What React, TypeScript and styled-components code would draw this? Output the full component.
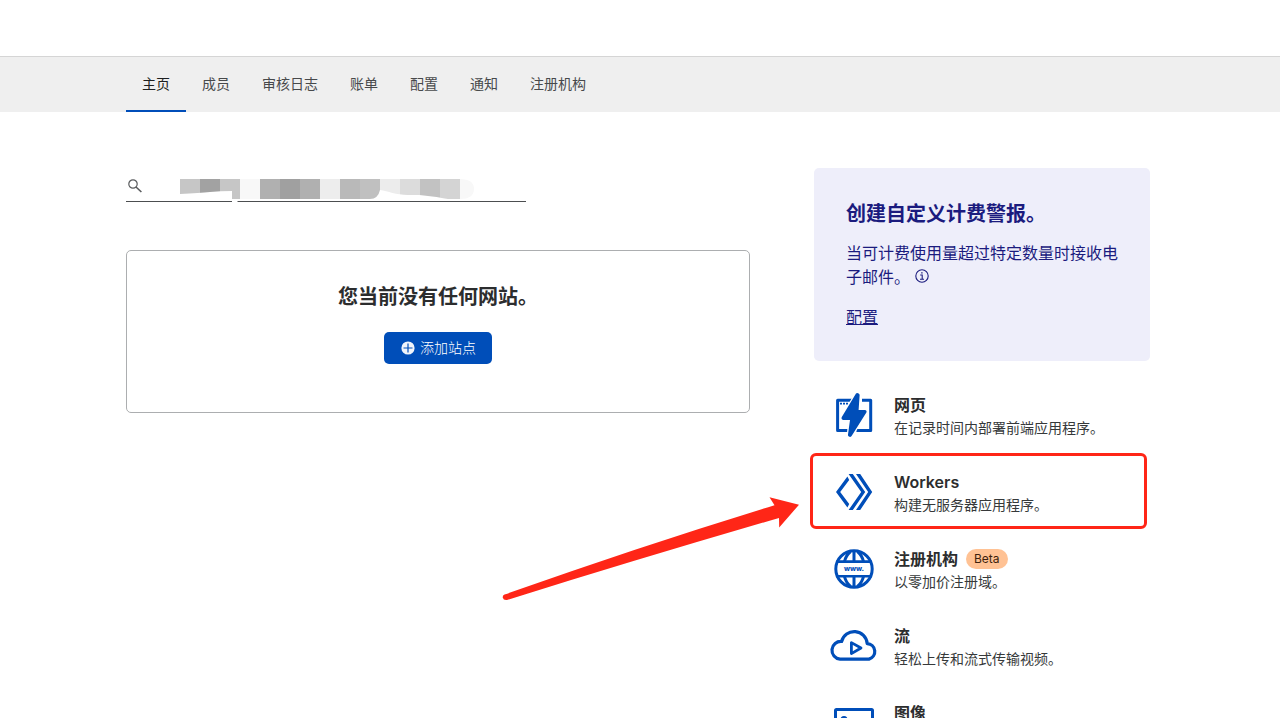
import React from 'react';
import styled, { createGlobalStyle } from 'styled-components';

const BLUE = '#004eb9';
const NAVY = '#1b1b7e';
const RED = '#ff2617';

const GlobalStyle = createGlobalStyle`
  *, *::before, *::after { box-sizing: border-box; }
  html { scrollbar-width: none; }
  body {
    margin: 0;
    background: #fff;
    color: #2c2d2e;
    font-family: Inter, 'Noto Sans CJK SC', sans-serif;
    font-size: 14px;
    line-height: 21px;
  }
  h1, h2, h3, p, ul { margin: 0; padding: 0; }
  button, input { font: inherit; }
`;

const Header = styled.header`
  height: 56px;
`;

const NavBar = styled.nav`
  height: 56px;
  padding-right: 4px;
  border-top: 1px solid #d5d5d5;
  background: #efefef;
`;

const Tabs = styled.div`
  display: flex;
  height: 100%;
  max-width: 1024px;
  margin: 0 auto;
`;

const Tab = styled.a<{ $active?: boolean }>`
  display: flex;
  align-items: center;
  padding: 0 16px;
  border-bottom: 2px solid ${({ $active }) => ($active ? BLUE : 'transparent')};
  color: ${({ $active }) => ($active ? '#1d1f20' : '#47494b')};
  text-decoration: none;
  white-space: nowrap;
`;

const Page = styled.main`
  padding: 56px 4px 0 0;
`;

const Columns = styled.div`
  display: grid;
  grid-template-columns: minmax(0, 1fr) 336px;
  gap: 64px;
  max-width: 1024px;
  margin: 0 auto;
`;

const Primary = styled.section`
  display: flex;
  flex-direction: column;
  gap: 48px;
`;

const SearchField = styled.label`
  position: relative;
  display: flex;
  align-items: center;
  gap: 8px;
  width: 400px;
  height: 34px;
  padding: 2px 0 0 2px;
  border-bottom: 1px solid #4c4e50;
`;

const SearchInput = styled.input`
  flex: 1;
  min-width: 0;
  padding: 0;
  border: 0;
  outline: 0;
  background: transparent;
`;

const Redaction = styled.svg`
  position: absolute;
  left: 54px;
  top: 11px;
`;

const EmptyCard = styled.div`
  display: flex;
  flex-direction: column;
  align-items: center;
  gap: 24px;
  padding: 32px 32px 48px;
  border: 1px solid #acaeb0;
  border-radius: 5px;
`;

const Heading = styled.h2`
  padding-top: 4px;
  font-size: 20px;
  font-weight: 600;
  line-height: 21px;
`;

const AddButton = styled.button`
  display: flex;
  align-items: center;
  gap: 4px;
  height: 32px;
  padding: 0 16px;
  border: 0;
  border-radius: 5px;
  background: ${BLUE};
  color: #fff;
  font-weight: 300;
  line-height: 20px;
  cursor: pointer;
`;

const AlertCard = styled.section`
  display: flex;
  flex-direction: column;
  align-items: flex-start;
  gap: 16px;
  padding: 32px;
  border-radius: 5px;
  background: #eeeefa;
  color: ${NAVY};
  font-size: 16px;
  line-height: 24px;
`;

const InfoButton = styled.button`
  display: inline-flex;
  margin-left: 5px;
  padding: 0 0 1px;
  border: 0;
  background: none;
  color: inherit;
`;

const AlertLink = styled.a`
  color: inherit;
  text-decoration: underline;
`;

const ProductList = styled.ul`
  padding-top: 16px;
  list-style: none;
`;

const Product = styled.li`
  position: relative;
  display: flex;
  gap: 16px;
  padding: 16px;
`;

const ProductIcon = styled.svg`
  flex: none;
  width: 48px;
  height: 45px;
  color: ${BLUE};
`;

const ProductTitle = styled.h3`
  display: flex;
  align-items: center;
  gap: 8px;
  font-size: 16px;
  font-weight: 600;
  line-height: 24px;
`;

const ProductText = styled.p`
  color: #36393a;
`;

const Badge = styled.span`
  padding: 0 8px;
  border-radius: 10px;
  background: #ffc294;
  color: #3d1f0c;
  font-size: 12px;
  font-weight: 400;
  line-height: 20px;
`;

const HighlightBox = styled.span`
  position: absolute;
  inset: -1px 3px 2px -4px;
  border: 3px solid ${RED};
  border-radius: 6px;
  pointer-events: none;
`;

const HighlightArrow = styled.svg`
  position: absolute;
  top: 42px;
  right: calc(100% + 14px);
  pointer-events: none;
`;

const tabs = ['主页', '成员', '审核日志', '账单', '配置', '通知', '注册机构'];

const mosaic = [
  '#c6c6c6', '#a2a2a2', '#c6c6c6', '#f8f8f8', '#b0b0b0', '#a0a0a0', '#b0b0b0', '#ededed',
  '#b9b9b9', '#c0c0c0', '#ececec', '#dcdcdc', '#c2c2c2', '#d4d4d4', '#f8f8f8',
];

const PagesIcon = () => (
  <g>
    <path
      d="M23 8.2H7.6v30.3h10M32 8.2h8.7v30.3H26.4"
      fill="none"
      stroke="currentColor"
      strokeWidth="3"
      strokeLinejoin="round"
    />
    <path d="M10 10.8h2v1.8h-2zM13 10.8h2v1.8h-2zM16 10.8h2v1.8h-2z" fill="currentColor" />
    <path
      d="M26 1.6Q27 .6 28.6 1.4 29.8 2 29.6 3.4L28.6 18H35Q37.4 18.4 36.2 20.8L21.6 44Q20.4 45.4 19 44.6 17.8 44 18 42.6L20 28H13Q10.8 27.4 11.8 25Z"
      fill="currentColor"
      stroke="#fff"
      strokeWidth="2.4"
      paintOrder="stroke"
    />
  </g>
);

const WorkersIcon = () => (
  <g fill="currentColor">
    <path d="M17.4 7.6 6 23l11.4 15.4 1.8-3.4L10.2 23l9-12Z" />
    <path d="M18.6 5h4.2L35.2 23 22.8 41h-4.2L31.2 23Z" />
    <path d="M26 5h4.2L42.2 23 30.200 41H26L38.2 23Z" />
  </g>
);

const RegistrarIcon = () => (
  <g fill="none" stroke="currentColor" strokeWidth="3">
    <circle cx="24" cy="23" r="18.2" />
    <path d="M24 5v11M24 30v11" />
    <path d="M20.5 5.5Q15.6 9.8 14.4 16M27.5 5.5Q32.4 9.8 33.6 16M20.5 40.5Q15.6 36.2 14.4 30M27.5 40.5Q32.4 36.2 33.6 30" />
    <path d="M6.5 15.6h35M6.500 30.2h35" strokeWidth="2.6" />
    <text x="24" y="25" textAnchor="middle" fontSize="7" fontWeight="800" fill="currentColor" stroke="none">
      www.
    </text>
  </g>
);

const StreamIcon = () => (
  <g fill="none" stroke="currentColor" strokeWidth="3.2" strokeLinejoin="round">
    <path d="M10 36.1A8.7 8.7 0 0 1 11.600 18.500 13 13 0 0 1 37.200 20.600 7.900 7.900 0 0 1 39 36.100Z" />
    <path d="M21.400 19.600v11L31 25Z" strokeWidth="2.800" />
  </g>
);

const ImagesIcon = () => (
  <g fill="none" stroke="currentColor" strokeWidth="3">
    <rect x="5.5" y="9.5" width="37" height="28" rx="1" />
    <circle cx="14" cy="19.5" r="2" />
    <path d="M8 34l10-9 7 6 8-8 8 8" />
  </g>
);

interface ProductData {
  title: string;
  text: string;
  icon: React.ReactNode;
  badge?: string;
  highlighted?: boolean;
}

const products: ProductData[] = [
  { title: '网页', text: '在记录时间内部署前端应用程序。', icon: <PagesIcon /> },
  { title: 'Workers', text: '构建无服务器应用程序。', icon: <WorkersIcon />, highlighted: true },
  { title: '注册机构', text: '以零加价注册域。', icon: <RegistrarIcon />, badge: 'Beta' },
  { title: '流', text: '轻松上传和流式传输视频。', icon: <StreamIcon /> },
  { title: '图像', text: '', icon: <ImagesIcon /> },
];

export default function App() {
  return (
    <>
      <GlobalStyle />
      <Header />
      <NavBar>
        <Tabs>
          {tabs.map((label, i) => (
            <Tab key={label} href="#" $active={i === 0}>
              {label}
            </Tab>
          ))}
        </Tabs>
      </NavBar>
      <Page>
        <Columns>
          <Primary>
            <SearchField>
              <svg width="14" height="14" viewBox="0 0 14 14" fill="none" stroke="#595b5d" aria-hidden="true">
                <circle cx="5" cy="5" r="4.2" strokeWidth="1.2" />
                <path d="M8 8l5.4 5" strokeWidth="1.6" />
              </svg>
              <SearchInput type="search" aria-label="搜索网站" />
              <Redaction width="294" height="24" viewBox="0 0 294 24" aria-hidden="true">
                <clipPath id="smear">
                  <path d="M0 0H280Q294 0 294 10T280 20H268C250 17 246 16 228 16 216 16 208 12 200 11Q198 20 190 20H52V12Q40 12 30 13T0 15Z" />
                </clipPath>
                <g clipPath="url(#smear)">
                  {mosaic.map((fill, i) => (
                    <rect key={i} x={i * 20} width="20" height="20" fill={fill} shapeRendering="crispEdges" />
                  ))}
                </g>
                <path d="M52 20h8l-4 4h-4z" fill="#fff" />
              </Redaction>
            </SearchField>
            <EmptyCard>
              <Heading>您当前没有任何网站。</Heading>
              <AddButton type="button">
                <svg width="16" height="16" viewBox="0 0 16 16" aria-hidden="true">
                  <circle cx="8" cy="8" r="6.6" fill="#f0f4fb" />
                  <path d="M8 3.5v9M3.5 8h9" stroke={BLUE} strokeWidth="1.2" />
                </svg>
                添加站点
              </AddButton>
            </EmptyCard>
          </Primary>
          <aside>
            <AlertCard>
              <Heading>创建自定义计费警报。</Heading>
              <p>
                当可计费使用量超过特定数量时接收电子邮件。
                <InfoButton type="button" aria-label="更多信息">
                  <svg width="14" height="14" viewBox="0 0 14 14" fill="none" stroke="currentColor">
                    <circle cx="7" cy="7" r="6.2" strokeWidth="1.1" />
                    <path d="M5.2 6h2v4M5 10.2h4" strokeWidth="1.1" />
                    <path d="M6.2 3.9h1.4" strokeWidth="1.4" />
                  </svg>
                </InfoButton>
              </p>
              <AlertLink href="#">配置</AlertLink>
            </AlertCard>
            <ProductList>
              {products.map(({ title, text, icon, badge, highlighted }) => (
                <Product key={title}>
                  <ProductIcon viewBox="0 1 48 45" aria-hidden="true">
                    {icon}
                  </ProductIcon>
                  <div>
                    <ProductTitle>
                      {title}
                      {badge && <Badge>{badge}</Badge>}
                    </ProductTitle>
                    <ProductText>{text}</ProductText>
                  </div>
                  {highlighted && (
                    <>
                      <HighlightBox />
                      <HighlightArrow width="298" height="105" viewBox="502 496 298 105" aria-hidden="true">
                        <path
                          d="M504.5 594.6Q638 547 774.5 505.2L769.5 497.3 799 504.7 779.2 527.5 779 518Q638 559 507 600 503.5 600.5 502.7 597.5 502.5 595.5 504.5 594.6Z"
                          fill={RED}
                        />
                      </HighlightArrow>
                    </>
                  )}
                </Product>
              ))}
            </ProductList>
          </aside>
        </Columns>
      </Page>
    </>
  );
}
